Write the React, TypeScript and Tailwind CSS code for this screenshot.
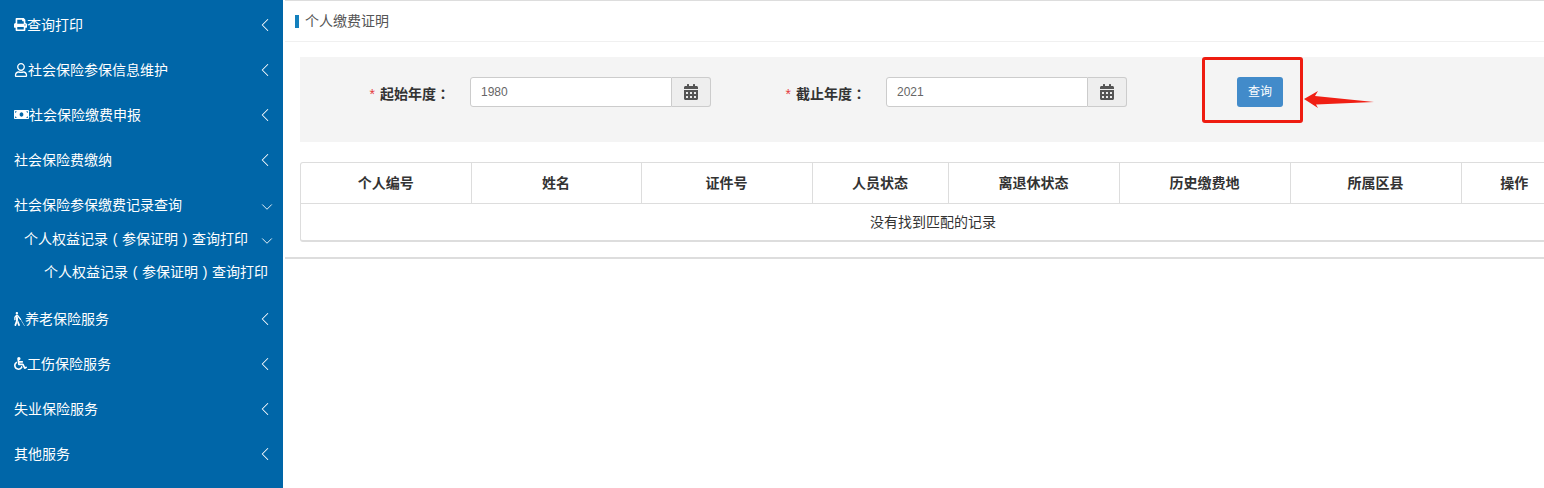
import { FaBlind, FaCalendarAlt, FaMoneyBill, FaPrint, FaRegUser, FaWheelchair } from 'react-icons/fa'
import { ChevronDown, ChevronLeft } from 'lucide-react'
import type { ReactNode } from 'react'

const fontClass = "font-['Liberation_Sans','Noto_Sans_CJK_SC',sans-serif]"
// the full-width colon sits centred in the reference, as in the TC cut
const pontuacao = "font-['Noto_Sans_CJK_TC',sans-serif]"

const colunas = [
  { nome: '个人编号', largura: 'w-[170px]' },
  { nome: '姓名', largura: 'w-[170px]' },
  { nome: '证件号', largura: 'w-[171px]' },
  { nome: '人员状态', largura: 'w-[136px]' },
  { nome: '离退休状态', largura: 'w-[171px]' },
  { nome: '历史缴费地', largura: 'w-[171px]' },
  { nome: '所属区县', largura: 'w-[171px]' },
  { nome: '操作', largura: 'w-[106px]' },
]

function Seta({ open }: { open?: boolean }) {
  return open ? (
    <ChevronDown className="ml-auto mr-[-4px] mt-1 size-[18px]" strokeWidth={1.2} />
  ) : (
    <ChevronLeft className="ml-auto mr-[-4px] size-[22px]" strokeWidth={1.1} />
  )
}

function MenuItem({ icon, label, open }: { icon?: ReactNode; label: string; open?: boolean }) {
  return (
    <div className="flex h-[45px] items-center pl-[14px] pr-[11px] text-sm text-white">
      {icon}
      <span>{label}</span>
      <Seta open={open} />
    </div>
  )
}

function TextoComprovante() {
  return (
    <span>
      个人权益记录<span className="inline-block w-[14px] text-center">(</span>参保证明
      <span className="inline-block w-[14px] text-center">)</span>查询打印
    </span>
  )
}

function DateField({ label, value, labelWidth }: { label: string; value: string; labelWidth: string }) {
  return (
    <>
      <label className={`${labelWidth} mr-[20px] mt-[2px] text-right text-sm font-bold text-[#333]`}>
        <span className="mr-[5px] font-normal text-[#e4393c]">*</span>
        {label}
        <span className={pontuacao}>：</span>
      </label>
      <div className="flex h-[30px] w-[241px]">
        <input
          readOnly
          value={value}
          className="h-full min-w-0 flex-1 rounded-l-[3px] border border-[#ccc] bg-white px-[10px] text-xs text-[#666] outline-none"
        />
        <span className="flex w-[39px] items-center justify-center rounded-r-[3px] border border-l-0 border-[#ccc] bg-[#eee] text-[#555]">
          <FaCalendarAlt className="size-[16px]" />
        </span>
      </div>
    </>
  )
}

export default function App() {
  return (
    <div className={`${fontClass} flex h-screen w-full overflow-hidden bg-white`}>
      <aside className="w-[283px] shrink-0 bg-[#0066a8] pt-[2px]">
        <MenuItem icon={<FaPrint className="size-[13px] shrink-0" />} label="查询打印" />
        <MenuItem icon={<FaRegUser className="size-[14px] shrink-0" />} label="社会保险参保信息维护" />
        <MenuItem icon={<FaMoneyBill className="size-[15px] shrink-0" />} label="社会保险缴费申报" />
        <MenuItem label="社会保险费缴纳" />
        <MenuItem label="社会保险参保缴费记录查询" open />
        <div className="-mt-[5px] flex h-[33px] items-center pl-[24px] pr-[11px] text-sm text-white">
          <TextoComprovante />
          <Seta open />
        </div>
        <div className="flex h-[33px] items-center pl-[44px] text-sm text-white">
          <TextoComprovante />
        </div>
        <div className="h-[8px]" />
        <MenuItem icon={<FaBlind className="h-[14px] w-[11px] shrink-0" />} label="养老保险服务" />
        <MenuItem icon={<FaWheelchair className="size-[13px] shrink-0" />} label="工伤保险服务" />
        <MenuItem label="失业保险服务" />
        <MenuItem label="其他服务" />
      </aside>

      <main className="relative ml-[2px] min-w-0 flex-1 overflow-hidden">
        <div className="w-[1296px] border-b-2 border-t border-b-[#ddd] border-t-[#ddd] pb-[15px]">
          <div className="flex h-[41px] items-center border-b border-[#f0f0f0] pl-[10px] text-sm text-[#555]">
            <span className="mr-[6px] h-[13px] w-[4px] bg-[#1480bd]" />
            个人缴费证明
          </div>

          <div className="mx-[15px] mt-[15px] flex h-[85px] items-start bg-[#f4f4f4] pt-[20px]">
            <div className="flex h-[30px] items-center">
              <DateField label="起始年度" value="1980" labelWidth="w-[150px]" />
              <DateField label="截止年度" value="2021" labelWidth="w-[155px]" />
              <button className="ml-[110px] h-[30px] w-[46px] rounded-[3px] bg-[#428bca] text-xs text-white">查询</button>
            </div>
          </div>

          <div className="mx-[15px] mt-[20px] overflow-hidden rounded-[3px] border border-b-2 border-[#ddd]">
            <table className="w-full table-fixed border-collapse text-sm text-[#333]">
              <thead>
                <tr className="h-[40px] border-b border-[#ddd]">
                  {colunas.map((coluna) => (
                    <th
                      key={coluna.nome}
                      className={`${coluna.largura} border-r border-[#ddd] font-bold last:border-r-0`}
                    >
                      {coluna.nome}
                    </th>
                  ))}
                </tr>
              </thead>
              <tbody>
                <tr className="h-[37px]">
                  <td colSpan={8} className="text-center">
                    <span className="relative left-[-1px]">没有找到匹配的记录</span>
                  </td>
                </tr>
              </tbody>
            </table>
          </div>
        </div>

        <div className="absolute left-[917px] top-[57px] h-[66px] w-[101px] rounded-[3px] border-[3px] border-[#ee1c10]" />
        <svg className="absolute left-[1015px] top-[88px]" width="80" height="24" viewBox="0 0 80 24">
          <polygon points="4,11 18,3 15,8 74,14 16,16.5 18,20" fill="#f01f14" />
        </svg>
      </main>
    </div>
  )
}
